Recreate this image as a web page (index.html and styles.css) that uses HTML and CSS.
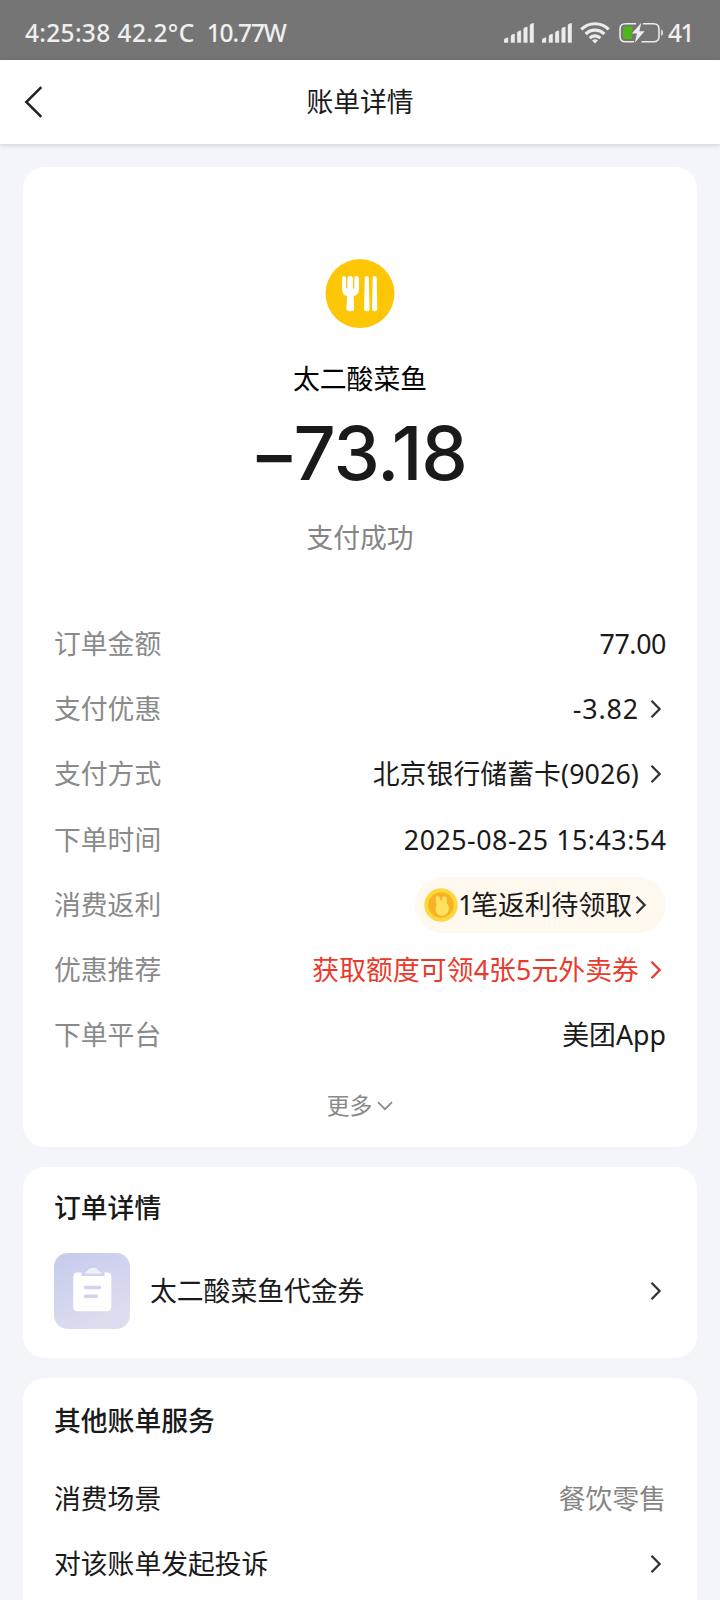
FILE: index.html
```html
<!DOCTYPE html>
<html lang="zh-CN">
<head>
<meta charset="utf-8">
<title>账单详情</title>
<link rel="stylesheet" href="styles.css">
</head>
<body>
<svg class="defs" width="0" height="0" aria-hidden="true">
  <symbol id="chevron" viewBox="0 0 12 20"><path d="M1.5 1.8 9.6 10 1.5 18.2" fill="none" stroke="currentColor" stroke-width="2.3"/></symbol>
  <symbol id="signal" viewBox="0 0 30 20">
    <path d="M0 19.5v-2.3q0-1.7 2-2l2-.6v4.900zM7 19.500v-6.300q0-1.500 3.600-2.100v8.400zM13.300 19.500V9.700q0-1.500 3.600-2v11.800zM19.700 19.500V6q0-1.500 3.600-2v15.500zM26 19.500V2.300Q26 .8 29.700.3v19.200z" fill="#ececec" stroke="#ececec" stroke-width=".4"/>
  </symbol>
</svg>
<div class="status">
  <div class="status-left"><span class="clock">4:25:38</span><span class="temp">42.2°C</span><span class="watt">10.77W</span></div>
  <div class="status-right">
    <svg class="signal" width="30" height="20"><use href="#signal"/></svg>
    <svg class="signal" width="30" height="20"><use href="#signal"/></svg>
    <svg class="wifi" width="30" height="22" viewBox="0 0 30 22" fill="none" stroke="#ececec" stroke-width="3.200">
      <path d="M1.300 7.400a19.400 19.400 0 0 1 27.400 0M5.700 12a13.200 13.200 0 0 1 18.600 0M9.700 16.100a7.500 7.500 0 0 1 10.600 0"/>
      <path d="M12 18.400q3-2.300 6 0L15 21.600z" fill="#ececec" stroke="none"/>
    </svg>
    <svg class="battery" width="45" height="22" viewBox="0 0 45 22">
      <path d="M17 1.800H6.500Q1 1.800 1 7v7.500q0 5.300 5.500 5.300H15M24 1.800h10.500Q40 1.800 40 7v7.500q0 5.300-5.500 5.300H22.500" fill="none" stroke="#ececec" stroke-width="1.600"/>
      <path d="M14 4.500H6.500Q4 4.500 4 7v7.500Q4 17 6.500 17H13l-.5-5z" fill="#4db817"/>
      <path d="M22.300.8 12.800 11.500h5.200L15.800 20.800 25.600 9.300h-5.200z" fill="#ececec"/>
      <path d="M42.200 7.500q1.800.3 1.800 3.300t-1.800 3.300z" fill="#ececec"/>
    </svg>
    <span class="level">41</span>
  </div>
</div>
<header class="header">
  <svg class="back" width="20" height="34" viewBox="0 0 20 34"><path d="M17.300 2.200 2.300 17 17.300 31.800" fill="none" stroke="#222" stroke-width="2.500"/></svg>
  <h1 class="title">账单详情</h1>
</header>
<main class="cards">
  <section class="card bill">
    <svg class="merchant-icon" width="70" height="70" viewBox="0 0 70 70">
      <circle cx="35" cy="34.600" r="34.500" fill="#fdc708"/>
      <path d="M17 20q0-3 2-3t2.100 3v9.500h1.300V20q0-3 2.800-3t2.800 3v9.500h1.300V20q0-3 2.100-3t2.600 3v9.500q0 6.500-5.500 7.700l.7 12.300q.2 2.700-3.900 2.700t-3.900-2.700l.7-12.300Q17 36 17 29.500z" fill="#fff"/>
      <path d="M39.800 18.800q0-1.800 2-1.800t2 1.800L44.500 50q0 2.200-2.700 2.200T39 50zM47.700 18.800q0-1.800 2-1.800t2 1.800L52.300 50q0 2.200-2.600 2.200T47 50z" fill="#fff"/>
    </svg>
    <div class="merchant">太二酸菜鱼</div>
    <div class="amount"><span class="minus">−</span>73.18</div>
    <div class="state">支付成功</div>
    <dl class="rows">
      <div class="row"><dt>订单金额</dt><dd class="total">77.00</dd></div>
      <div class="row"><dt>支付优惠</dt><dd class="link discount"><span>-3.82</span><svg class="chev"><use href="#chevron"/></svg></dd></div>
      <div class="row"><dt>支付方式</dt><dd class="link"><span>北京银行储蓄卡(9026)</span><svg class="chev"><use href="#chevron"/></svg></dd></div>
      <div class="row"><dt>下单时间</dt><dd class="time">2025-08-25 15:43:54</dd></div>
      <div class="row"><dt>消费返利</dt><dd class="rebate">
        <svg width="34" height="34" viewBox="0 0 34 34">
          <circle cx="17" cy="17" r="16.700" fill="#fdd83c"/>
          <circle cx="17" cy="17" r="12.800" fill="#f7b323"/>
          <path d="M11.500 9q2.500-2 4.200.5l1.500 4.500 1.500-5q2.300-2 4 .8v5.500q2.600 2.700 2 6.700-1 5.300-6.600 5.800-6-.4-6.500-6-.3-2.500 1-4.500z" fill="#ffe360"/>
        </svg><span><span class="count">1</span>笔返利待领取</span><svg class="chev"><use href="#chevron"/></svg></dd></div>
      <div class="row"><dt>优惠推荐</dt><dd class="link promo"><span>获取额度可领4张5元外卖券</span><svg class="chev"><use href="#chevron"/></svg></dd></div>
      <div class="row"><dt>下单平台</dt><dd>美团App</dd></div>
    </dl>
    <div class="more"><span>更多</span><svg width="16" height="10" viewBox="0 0 16 10"><path d="M1 1.200 8 8.200 15 1.200" fill="none" stroke="#8a8a8a" stroke-width="1.700"/></svg></div>
  </section>
  <section class="card order">
    <h2 class="heading">订单详情</h2>
    <div class="item">
      <svg width="76" height="76" viewBox="0 0 76 76">
        <defs><linearGradient id="tile" x1="0" y1="0" x2=".5" y2="1"><stop offset="0" stop-color="#c5cbed"/><stop offset="1" stop-color="#deddef"/></linearGradient></defs>
        <rect width="76" height="76" rx="14" fill="url(#tile)"/>
        <path d="M23 19.500h4.500V23h23v-3.500H53q4.300 0 4.300 4.300V54q0 4.300-4.300 4.300H23.500q-4.300 0-4.300-4.300V23.800q0-4.300 3.800-4.300z" fill="#fff"/>
        <path d="M30.500 20.800q1-2.300 3-3 1.300-3 5.500-3t5.500 3q2 .7 3 3z" fill="#eef0fb"/>
        <path d="M31.500 34.500h14M31.500 43.200h11" stroke="#d3d3ed" stroke-width="3.600" stroke-linecap="round"/>
      </svg>
      <span class="item-name">太二酸菜鱼代金券</span>
      <svg class="chev"><use href="#chevron"/></svg>
    </div>
  </section>
  <section class="card services">
    <h2 class="heading">其他账单服务</h2>
    <div class="row"><span>消费场景</span><span class="muted">餐饮零售</span></div>
    <div class="row"><span>对该账单发起投诉</span><svg class="chev"><use href="#chevron"/></svg></div>
  </section>
</main>
</body>
</html>
```

FILE: styles.css
```css
* { box-sizing: border-box; }
body {
  margin: 0;
  height: 1600px;
  overflow: hidden;
  background: #f4f5fa;
  color: #1a1a1a;
  font: 26.8px/40px "Noto Sans", "Noto Sans CJK SC", sans-serif;
}
svg { display: block; flex: none; }
.defs { position: absolute; }
h1, h2, dl, dd { margin: 0; font-size: inherit; font-weight: 400; }

.status {
  display: flex;
  align-items: center;
  justify-content: space-between;
  height: 60px;
  padding: 6px 27px 0 25px;
  background: #757575;
  color: #efefef;
  font-size: 24.5px;
  font-weight: 500;
}
.status-left, .status-right { display: flex; align-items: center; white-space: nowrap; }
.clock { letter-spacing: .3px; }
.temp { margin-left: 7px; letter-spacing: .4px; }
.watt { margin-left: 12px; letter-spacing: -1.1px; }
.signal { margin-right: 8px; }
.wifi { margin-right: 9px; }
.battery { margin-right: 4px; }
.level { letter-spacing: -1.5px; }

.header {
  position: relative;
  display: grid;
  grid-template-columns: 1fr auto 1fr;
  align-items: center;
  height: 84px;
  padding: 0 24px;
  background: #fff;
  box-shadow: 0 1px 5px rgba(0, 0, 0, .17);
}
.title { font-weight: 400; }

.cards { display: flex; flex-direction: column; gap: 20px; padding: 23px 23px 0; }
.card { background: #fff; border-radius: 22px; padding: 0 31px; flex: none; }
.bill { display: flex; flex-direction: column; align-items: center; height: 980px; padding-top: 92px; }
.merchant { margin-top: 30px; color: #000; }
.amount {
  display: flex;
  align-items: center;
  height: 80px;
  margin: 14px 4px 0 0;
  font: 500 74px/80px Inter, sans-serif;
  letter-spacing: -1.2px;
}
.minus { margin-right: -4px; }
.state { margin-top: 25px; color: #858585; }
.rows { width: 100%; margin-top: 53px; }
.row { display: flex; align-items: center; justify-content: space-between; height: 65.3px; white-space: nowrap; }
dt { color: #8a8a8a; }
.total { letter-spacing: -.4px; }
.time { letter-spacing: .5px; margin-right: -.5px; }
.chev { width: 12px; height: 20px; color: #333; margin-right: 4px; }
.link { display: flex; align-items: center; gap: 11px; letter-spacing: .1px; }
.discount span { letter-spacing: .9px; }
.promo, .promo .chev { color: #ea3a2c; }
.rebate {
  display: flex;
  align-items: center;
  height: 56px;
  padding: 0 15px 0 9px;
  border-radius: 28px;
  background: #fff8ef;
}
.rebate > span { margin: 0 3px 0 0; }
.count { letter-spacing: -2px; }
.more { display: flex; align-items: center; gap: 5px; margin-top: 18px; font-size: 22.8px; color: #8a8a8a; }
.order { height: 191px; padding-top: 21px; }
.heading { font-weight: 500; }
.item { display: flex; align-items: center; margin-top: 25px; }
.item-name { flex: 1; margin-left: 20px; }
.services { height: 300px; padding-top: 23px; }
.services .heading { margin-bottom: 25px; }
.muted { color: #858585; }
```
